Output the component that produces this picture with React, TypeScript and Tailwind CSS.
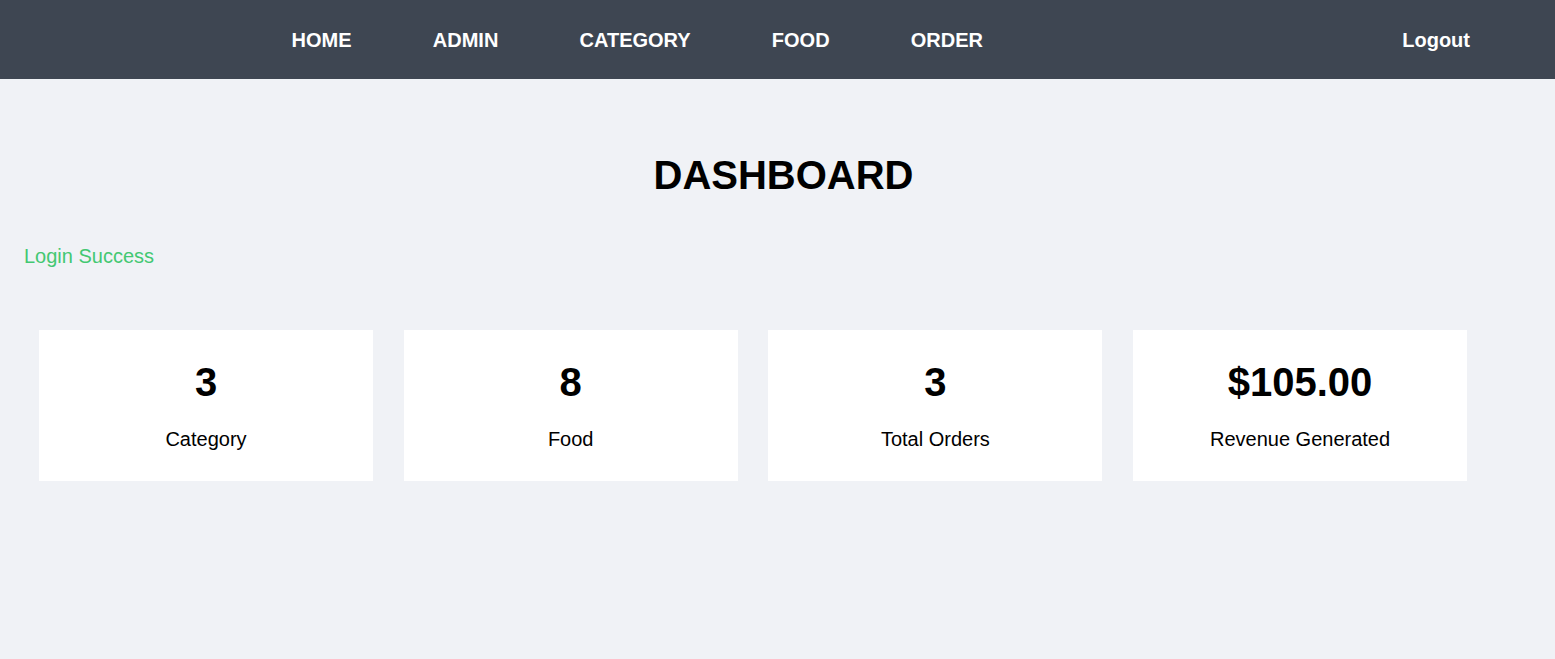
const navLinks = ['HOME', 'ADMIN', 'CATEGORY', 'FOOD', 'ORDER'];

const stats = [
  { value: '3', label: 'Category' },
  { value: '8', label: 'Food' },
  { value: '3', label: 'Total Orders' },
  { value: '$105.00', label: 'Revenue Generated' },
];

export default function App() {
  return (
    <div className="min-h-screen bg-[#f0f2f6] font-['Liberation_Sans',Arial,sans-serif] text-black">
      {/* Top nav */}
      <nav className="flex h-[79px] items-center bg-[#3e4652] pl-[251px] pr-[85px] pt-[2px]">
        <ul className="flex">
          {navLinks.map(link => (
            <li key={link}>
              <a href="#" className="block px-[40.6px] text-[20px] font-bold leading-[23px] text-white">
                {link}
              </a>
            </li>
          ))}
        </ul>
        <a href="#" className="ml-auto text-[20px] font-bold leading-[23px] text-white">
          Logout
        </a>
      </nav>

      <main>
        <h1 className="mt-[73px] pl-[12px] text-center text-[40px] font-bold leading-[46px]">
          DASHBOARD
        </h1>

        <p className="mt-[47px] pl-[24px] text-[20px] leading-[23px] text-[#43c872]">Login Success</p>

        <div className="mt-[62px] flex gap-[30.7px] pl-[39px]">
          {stats.map(s => (
            <div key={s.label} className="flex h-[151px] w-[334px] flex-col items-center bg-white pt-[29px]">
              <div className="text-[40px] font-bold leading-[46px]">{s.value}</div>
              <div className="mt-[23px] text-[20px] leading-[23px]">{s.label}</div>
            </div>
          ))}
        </div>
      </main>
    </div>
  );
}
